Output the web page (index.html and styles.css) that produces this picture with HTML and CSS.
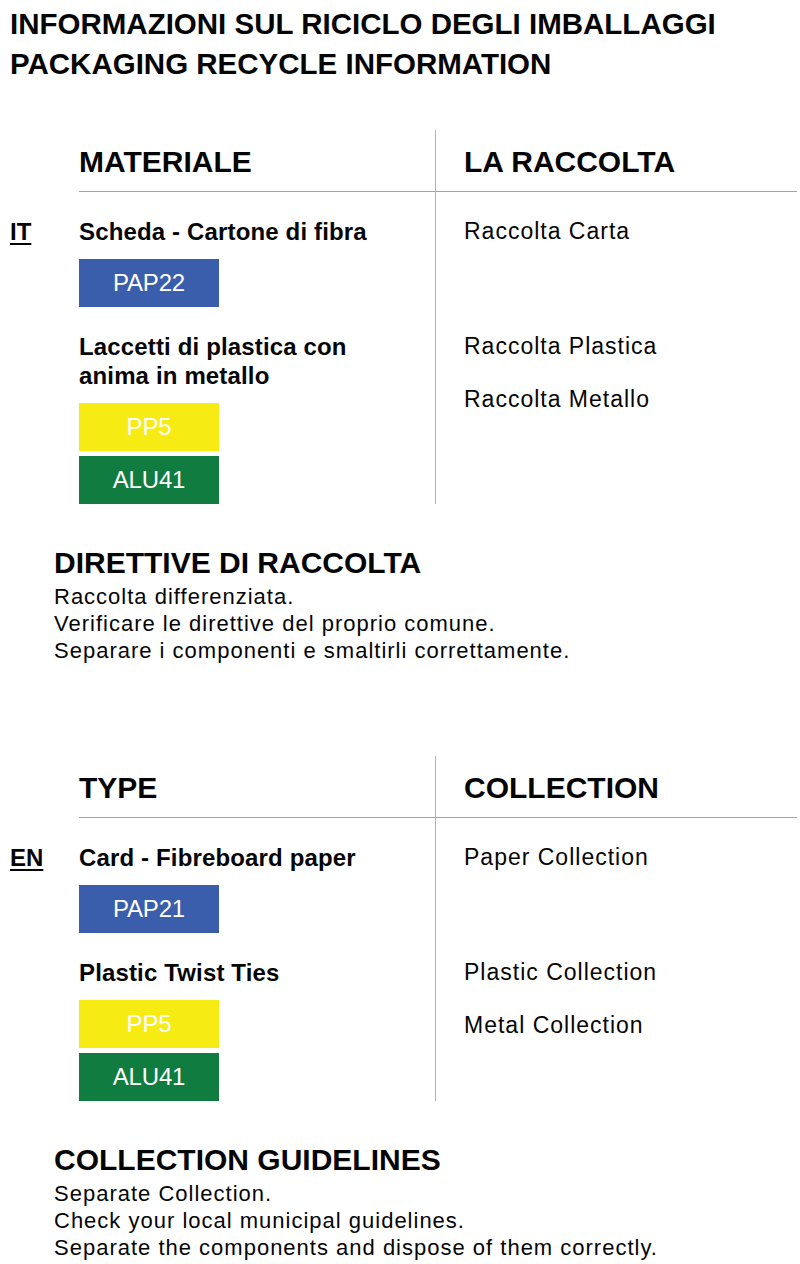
FILE: index.html
```html
<!DOCTYPE html>
<html lang="it">
<head>
<meta charset="utf-8">
<title>Informazioni sul riciclo degli imballaggi</title>
<link rel="stylesheet" href="styles.css">
</head>
<body>
<header class="title">
  <h1>INFORMAZIONI SUL RICICLO DEGLI IMBALLAGGI<br>PACKAGING RECYCLE INFORMATION</h1>
</header>

<section class="lang-block">
  <div class="table">
    <div class="cell head-spacer"></div>
    <div class="cell head head-material">MATERIALE</div>
    <div class="cell head head-collect">LA RACCOLTA</div>

    <div class="cell lang"><span class="lang-code">IT</span></div>
    <div class="cell item">
      <p class="item-name">Scheda - Cartone di fibra</p>
      <div class="badges">
        <span class="badge badge-blue">PAP22</span>
      </div>
    </div>
    <div class="cell collect">
      <p class="collect-line">Raccolta Carta</p>
    </div>

    <div class="cell lang"></div>
    <div class="cell item">
      <p class="item-name">Laccetti di plastica con<br>anima in metallo</p>
      <div class="badges">
        <span class="badge badge-yellow">PP5</span>
        <span class="badge badge-green">ALU41</span>
      </div>
    </div>
    <div class="cell collect">
      <p class="collect-line">Raccolta Plastica</p>
      <p class="collect-line">Raccolta Metallo</p>
    </div>
  </div>

  <div class="guidelines">
    <h2>DIRETTIVE DI RACCOLTA</h2>
    <p>Raccolta differenziata.</p>
    <p>Verificare le direttive del proprio comune.</p>
    <p>Separare i componenti e smaltirli correttamente.</p>
  </div>
</section>

<section class="lang-block lang-block-en">
  <div class="table">
    <div class="cell head-spacer"></div>
    <div class="cell head head-material">TYPE</div>
    <div class="cell head head-collect">COLLECTION</div>

    <div class="cell lang"><span class="lang-code">EN</span></div>
    <div class="cell item">
      <p class="item-name">Card - Fibreboard paper</p>
      <div class="badges">
        <span class="badge badge-blue">PAP21</span>
      </div>
    </div>
    <div class="cell collect">
      <p class="collect-line">Paper Collection</p>
    </div>

    <div class="cell lang"></div>
    <div class="cell item">
      <p class="item-name">Plastic Twist Ties</p>
      <div class="badges">
        <span class="badge badge-yellow">PP5</span>
        <span class="badge badge-green">ALU41</span>
      </div>
    </div>
    <div class="cell collect">
      <p class="collect-line">Plastic Collection</p>
      <p class="collect-line">Metal Collection</p>
    </div>
  </div>

  <div class="guidelines">
    <h2>COLLECTION GUIDELINES</h2>
    <p>Separate Collection.</p>
    <p>Check your local municipal guidelines.</p>
    <p>Separate the components and dispose of them correctly.</p>
  </div>
</section>
</body>
</html>
```

FILE: styles.css
```css
* {
  box-sizing: border-box;
}

html, body {
  margin: 0;
  padding: 0;
  background: #ffffff;
}

body {
  font-family: "Liberation Sans", Arial, "Helvetica Neue", sans-serif;
  color: #050505;
  width: 800px;
}

.title {
  padding: 4px 10px 0 10px;
}

.title h1 {
  margin: 0;
  font-size: 29.5px;
  line-height: 40px;
  font-weight: 700;
}

.lang-block {
  margin-top: 46px;
}

.lang-block-en {
  margin-top: 92px;
}

.table {
  display: grid;
  grid-template-columns: 69px 356px 1fr;
  padding-left: 10px;
  padding-right: 3px;
}

.cell {
  margin: 0;
}

.head {
  font-size: 30px;
  line-height: 36px;
  font-weight: 700;
  padding-top: 14px;
  padding-bottom: 11px;
  border-bottom: 1px solid #a3a3a3;
}

.head-collect {
  border-left: 1px solid #b3b3b3;
  padding-left: 28px;
}

.lang {
  padding-top: 25px;
}

.lang-code {
  display: inline-block;
  font-size: 24px;
  line-height: 29px;
  font-weight: 700;
  text-decoration: underline;
  text-decoration-thickness: 2px;
  text-underline-offset: 3px;
}

.item {
  padding-top: 25px;
}

.item-name {
  margin: 0;
  font-size: 24px;
  line-height: 29px;
  font-weight: 700;
  letter-spacing: 0.15px;
}

.badges {
  display: flex;
  flex-direction: column;
  gap: 5px;
  margin-top: 13px;
}

.badge {
  display: flex;
  align-items: center;
  justify-content: center;
  width: 140px;
  height: 48px;
  font-size: 24px;
  letter-spacing: -0.2px;
  color: #ffffff;
}

.badge-blue {
  background: #3a5eab;
}

.badge-yellow {
  background: #f6ec14;
}

.badge-green {
  background: #117c40;
}

.collect {
  border-left: 1px solid #b3b3b3;
  padding-left: 28px;
  padding-top: 25px;
  display: flex;
  flex-direction: column;
  gap: 24px;
}

.collect-line {
  margin: 0;
  font-size: 23px;
  line-height: 29px;
  letter-spacing: 1px;
}

.guidelines {
  padding-left: 54px;
  margin-top: 42px;
}

.guidelines h2 {
  margin: 0 0 4px 0;
  font-size: 30px;
  line-height: 33px;
  font-weight: 700;
}

.guidelines p {
  margin: 0;
  font-size: 22px;
  line-height: 27px;
  letter-spacing: 1px;
}
```
